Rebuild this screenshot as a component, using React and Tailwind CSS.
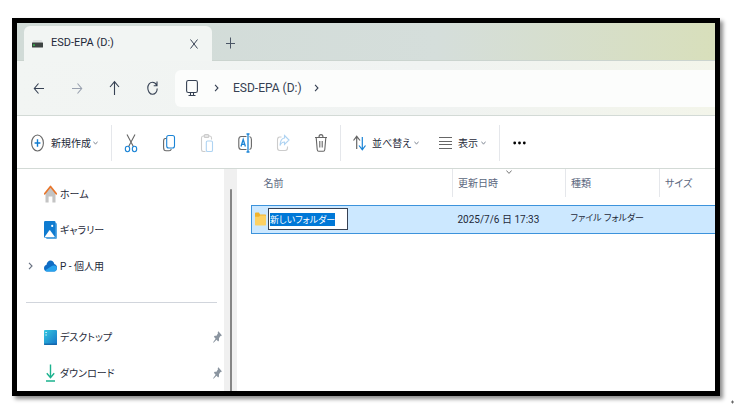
import { useEffect, useRef } from 'react';

const places = [
  { id: 'home', name: 'ホーム', icon: HomeIcon },
  { id: 'gallery', name: 'ギャラリー', icon: GalleryIcon },
  { id: 'onedrive', name: 'P - 個人用', icon: CloudIcon, expandable: true },
];

const pinned = [
  { id: 'desktop', name: 'デスクトップ', icon: DesktopIcon },
  { id: 'downloads', name: 'ダウンロード', icon: DownloadIcon },
];

function Chevron({ className = '' }) {
  return (
    <svg className={className} viewBox="0 0 6 10" fill="none" stroke="currentColor" strokeWidth="1.4">
      <path d="M1.2 1.2 4.8 5 1.2 8.8" />
    </svg>
  );
}

function ChevronDown() {
  return (
    <svg className="w-[5px] h-1 text-gray-500" viewBox="0 0 5 4" fill="none" stroke="currentColor" strokeWidth="0.8">
      <path d="M.4.6 2.5 3.2 4.6.6" />
    </svg>
  );
}

function HomeIcon() {
  return (
    <svg className="w-[13px] h-[18px]" viewBox="0 0 13 18">
      <path d="M1.5 8 6.5 2l5 6v9.400H8.400v-5.800H4.600v5.800H1.500z" fill="#c4c4c4" />
      <path d="M.7 8.800 6.500 1.400l5.800 7.400" fill="none" stroke="#e8762c" strokeWidth="1.700" strokeLinejoin="round" strokeLinecap="round" />
    </svg>
  );
}

function GalleryIcon() {
  return (
    <svg className="w-[13px] h-[18px]" viewBox="0 0 13 18">
      <rect x="2" y="2" width="11" height="16" rx="1.2" fill="#5aa9e2" />
      <rect width="11.500" height="16.800" rx="1.200" fill="#0f7bd0" />
      <path d="M.8 15.800 5.200 9.500c.3-.4.700-.4 1 0l4.600 6.300-.5.500H1.300z" fill="#fff" />
      <rect x="7.200" y="3.700" width="2" height="2.400" rx=".8" fill="#fff" />
    </svg>
  );
}

function CloudIcon() {
  return (
    <svg className="w-[13px] h-3" viewBox="0 0 13 12">
      <path d="M3 11.5C1.2 11.5 0 10 0 8.2c0-1.7 1-3 2.4-3.2C3 2.2 4.5.5 6.5.5s3.3 1.3 3.8 3.5c1.6.2 2.7 1.7 2.7 3.7 0 2.200-1.200 3.800-2.900 3.800z" fill="#0f6cc4" />
      <path d="M1 10.400 7 6.500c1-.6 2-1.200 3.300-.9 1.500.200 2.400 1 2.700 2.200-.1 2.100-1.300 3.700-2.900 3.700H3c-.8 0-1.500-.4-2-1.100z" fill="#28a3ee" />
    </svg>
  );
}

function DesktopIcon() {
  return (
    <svg className="w-[13px] h-[15px]" viewBox="0 0 13 15">
      <defs>
        <linearGradient id="desk" x1="0" y1="0" x2="1" y2="1">
          <stop offset="0" stopColor="#35c8e0" />
          <stop offset="1" stopColor="#1473c8" />
        </linearGradient>
      </defs>
      <rect width="13" height="15" rx="1" fill="url(#desk)" />
      <path d="M1.500 2.500h1.200M1.500 5h1.200" stroke="#fff" strokeWidth="1.200" />
      <path d="M0 14.200h13" stroke="#135a9c" strokeWidth="1" />
    </svg>
  );
}

function DownloadIcon() {
  return (
    <svg className="w-[13px] h-[18px]" viewBox="0 0 13 18" fill="none" stroke="#1bb28e" strokeWidth="1.400">
      <path d="M6.500.5v13M2.800 9.200l3.700 4.400 3.700-4.400M2 17h9" />
    </svg>
  );
}

function PinIcon() {
  return (
    <svg className="w-[9px] h-3" viewBox="0 0 9 12" fill="#8b95a0">
      <path d="M5.400.3 8.800 4.200 8 5.200 7.400 5 6 7.200v2.400L5.200 10.500 3.500 8.700.6 11.700.1 11.300 2.600 7.700.9 5.800l.8-1 1.800-.1L5 2.200 4.700 1.200z" />
    </svg>
  );
}

function DriveIcon() {
  return (
    <svg className="w-[11px] h-2" viewBox="0 0 11 8">
      <path d="M1.500 0h8L11 2.600H0z" fill="#dfe2e1" />
      <rect y="2.400" width="11" height="5.200" rx=".5" fill="#3e4442" />
      <rect x="1" y="4.400" width="2" height="1.500" fill="#35b44a" />
    </svg>
  );
}

function FolderIcon() {
  return (
    <svg className="w-[11px] h-3.5 shrink-0" viewBox="0 0 11 14">
      <path d="M0 1.500C0 .9.400.5.900.5h3l1.200 2h5c.5 0 .9.400.9 1V9H0z" fill="#f2b32c" />
      <path d="M0 4.800h4l1.200-1.300h5c.5 0 .8.400.8.900v8.100c0 .6-.4 1-.9 1H.9c-.5 0-.9-.4-.9-1z" fill="#fdd163" />
    </svg>
  );
}

function NavButton({ label, disabled, children }) {
  return (
    <button aria-label={label} disabled={disabled} className="w-[38px] h-9 flex items-center justify-center text-gray-700 disabled:text-gray-400">
      <svg className="w-3 h-4" viewBox="0 0 12 16" fill="none" stroke="currentColor" strokeWidth="1.100">{children}</svg>
    </button>
  );
}

function ToolButton({ label, children }) {
  return (
    <button aria-label={label} className="w-[38px] h-9 flex items-center justify-center">
      <svg className="w-3.5 h-5" viewBox="0 0 14 20" fill="none" stroke="#666" strokeWidth="1.100">{children}</svg>
    </button>
  );
}

function Divider() {
  return <div className="w-px h-9 bg-gray-200" />;
}

function TabStrip() {
  return (
    <div className="flex h-[38px] pt-[3px] pl-[7px] bg-linear-to-r from-[#d1dbd7] via-[#d5dedb] via-60% to-[#d8dfbb] border-b border-[#cbd4cf]">
      <div className="-mb-px w-[188px] flex items-center pl-2 pr-3 bg-[#f2f5f3] rounded-t-md">
        <DriveIcon />
        <span className="flex-1 ml-2 text-[11px]">ESD-EPA (D:)</span>
        <button aria-label="タブを閉じる" className="w-2.5 h-5 flex items-center text-gray-700">
          <svg className="w-2 h-2.5" viewBox="0 0 8 10" fill="none" stroke="currentColor"><path d="M.5.500l7 9M7.500.500l-7 9" /></svg>
        </button>
      </div>
      <button aria-label="新しいタブ" className="w-9 flex items-center justify-center text-gray-600">
        <svg className="w-[9px] h-3" viewBox="0 0 9 12" fill="none" stroke="currentColor"><path d="M4.500.5v11M0 6.500h9" /></svg>
      </button>
    </div>
  );
}

function AddressRow() {
  return (
    <div className="flex items-center h-[55px] pl-[3px] bg-linear-to-r from-[#f2f5f3] via-[#f0f3f2] via-60% to-[#f3f5ea] border-b border-[#d3dad6]">
      <NavButton label="戻る"><path d="M11 8.500H1.500M5.500 3.500 1.300 8.500l4.200 5" /></NavButton>
      <NavButton label="進む" disabled><path d="M1 8.500h9.500M6.500 3.500l4.200 5-4.200 5" /></NavButton>
      <NavButton label="上へ"><path d="M5.500 15V2M1 7 5.500 1.700 10 7" /></NavButton>
      <NavButton label="更新"><path d="M9.700 5.200C8.800 3.400 7.300 2.200 5.500 2.200 2.800 2.200.8 4.800.8 8S2.800 14.300 5.500 14.300 10.200 11.700 10.200 8.500M10 1.500v4.200H6.700" /></NavButton>
      <nav aria-label="アドレス" className="flex-1 flex items-center h-[37px] ml-[3px] pl-[11px] bg-[#fcfdfc] rounded-l-md text-gray-700">
        <svg className="w-3 h-[18px]" viewBox="0 0 12 18" fill="none" stroke="currentColor" strokeWidth="1.100">
          <rect x=".6" y="1.500" width="10.800" height="12" rx="1.800" />
          <path d="M4.500 13.500v2.500M7.500 13.500v2.500M2.500 16.500h7" />
        </svg>
        <Chevron className="w-[5px] h-2 ml-4" />
        <a href="#drive" className="ml-[14px] text-xs">ESD-EPA (D:)</a>
        <Chevron className="w-[5px] h-2 ml-3" />
      </nav>
    </div>
  );
}

function Toolbar() {
  return (
    <div className="flex items-center h-[53px] pt-0.5 pl-3.5 border-b border-[#d3dad6] text-[10px]">
      <button className="flex items-center w-20 h-9">
        <svg className="w-[13px] h-[18px] mr-[7px]" viewBox="0 0 13 18" fill="none" strokeWidth="1.100">
          <ellipse cx="6.500" cy="9" rx="5.900" ry="8" stroke="#666" />
          <path d="M6.500 5.200v7.600M3.600 9h5.800" stroke="#0f7bd0" strokeWidth="1.400" />
        </svg>
        <span className="w-[42px] text-left whitespace-nowrap">新規作成</span>
        <ChevronDown />
      </button>
      <Divider />
      <ToolButton label="切り取り">
        <path d="M3 1.500 9.600 14M11 1.500 4.400 14" />
        <g stroke="#1b84d6"><ellipse cx="3.500" cy="16" rx="2.200" ry="2.700" /><ellipse cx="10.500" cy="16" rx="2.200" ry="2.700" /></g>
      </ToolButton>
      <ToolButton label="コピー">
        <path d="M4.500 5.500H3.300C2.200 5.500 1.600 6.500 1.600 8v6.500c0 2 1 3.300 2.500 3.300h3c1.200 0 2-.8 2.200-2" />
        <rect x="4.700" y="2.500" width="7.800" height="12.500" rx="2" stroke="#1b84d6" />
      </ToolButton>
      <ToolButton label="貼り付け">
        <path d="M5.500 18.500H3.200C2.200 18.500 1.500 17.700 1.500 16.500V5c0-1.200.7-2 1.700-2h6.600c1 0 1.700.8 1.700 2v1.500M4.200 2.500c0-.6.400-1 1-1h2.600c.6 0 1 .4 1 1v1c0 .6-.4 1-1 1H5.200c-.6 0-1-.4-1-1z" stroke="#ccc" />
        <rect x="6.300" y="8" width="6.200" height="10.500" rx="1.300" stroke="#aed3f2" />
      </ToolButton>
      <ToolButton label="名前の変更">
        <path d="M8.500 3.500H3.300C1.800 3.500.8 4.700.8 6.500v7c0 1.800 1 3 2.500 3h5.200M11.500 3.500c1.200.3 1.900 1.400 1.900 3v7c0 1.600-.7 2.700-1.900 3" />
        <path d="M3 13.500 5.200 6.500l2.200 7M3.700 11.300h3M8.500 1h3M10 1v18M8.500 19h3" stroke="#1b84d6" strokeWidth="1.300" />
      </ToolButton>
      <ToolButton label="共有">
        <path d="M5.500 4H3.700C2.400 4 1.500 5.200 1.500 6.800v8c0 1.600.9 2.700 2.200 2.700h5.600c1.300 0 2.200-1.100 2.200-2.700v-1.300" stroke="#ccc" />
        <path d="M8.500 2.500 13 7l-4.500 4.500V9C6.500 9 5 10 4 12.500 4.200 8 5.800 5.300 8.500 5z" stroke="#aed3f2" />
      </ToolButton>
      <ToolButton label="削除">
        <path d="M1 4.500h12M5 4.300C5 2.700 5.800 1.600 7 1.600S9 2.700 9 4.300M2.200 4.700l1 11.800c.1 1 .7 1.700 1.500 1.700h4.600c.8 0 1.400-.7 1.500-1.700l1-11.800M5.800 8v6.500M8.200 8v6.500" />
      </ToolButton>
      <Divider />
      <button className="flex items-center w-[85px] h-9 pl-3">
        <svg className="w-[13px] h-4 mr-1.5" viewBox="0 0 13 16" fill="none" strokeWidth="1.200">
          <path d="M3.700 14V1.500M.5 5.500l3.200-4.200L7 5.500" stroke="#666" />
          <path d="M9.300 2v12.500M6 10.500l3.300 4.200 3.200-4.200" stroke="#1b84d6" />
        </svg>
        <span className="w-[42px] text-left whitespace-nowrap">並べ替え</span>
        <ChevronDown />
      </button>
      <button className="flex items-center w-[73px] h-9 pl-[13px]">
        <svg className="w-[13px] h-3 mr-1.5" viewBox="0 0 13 12" stroke="#666"><path d="M0 .5h13M0 4.500h13M0 7.500h13M0 11.500h13" /></svg>
        <span className="w-[23px] text-left whitespace-nowrap">表示</span>
        <ChevronDown />
      </button>
      <Divider />
      <button aria-label="その他" className="w-[38px] h-9 flex items-center justify-center">
        <svg className="w-[13px] h-1" viewBox="0 0 13 4"><circle cx="1.700" cy="2" r="1.400" /><circle cx="6.500" cy="2" r="1.400" /><circle cx="11.300" cy="2" r="1.400" /></svg>
      </button>
    </div>
  );
}

function Place({ item, pin }) {
  const Icon = item.icon;
  return (
    <li>
      <a href={`#${item.id}`} className="flex items-center h-9 pl-[11px] pr-0.5">
        <span className="w-4 text-gray-500">{item.expandable && <Chevron className="w-[5px] h-2.5" />}</span>
        <Icon />
        <span className="flex-1 ml-[3px]">{item.name}</span>
        {pin && <PinIcon />}
      </a>
    </li>
  );
}

function Sidebar() {
  return (
    <aside className="flex shrink-0 w-[220px] text-[10px]">
      <div className="flex-1 pt-[7px]">
        <ul>{places.map(p => <Place key={p.id} item={p} />)}</ul>
        <hr className="mt-[18px] mb-4 ml-[9px] mr-[7px] border-gray-300" />
        <ul>{pinned.map(p => <Place key={p.id} item={p} pin />)}</ul>
      </div>
      <div className="w-[13px] pt-5 flex justify-center bg-[#f0f0f0]">
        <div className="w-0.5 bg-[#858585] rounded-t-full" />
      </div>
    </aside>
  );
}

function FileList() {
  const nameRef = useRef(null);

  useEffect(() => {
    nameRef.current?.focus();
    nameRef.current?.select();
  }, []);

  return (
    <div className="flex-1 min-w-0 pl-3.5">
      <table className="w-full table-fixed text-left text-[10px] whitespace-nowrap">
        <thead className="text-[#5b6780]">
          <tr className="h-7">
            <th className="w-[201px] pl-3 font-normal">名前</th>
            <th className="relative w-[113px] pl-[5px] font-normal border-l border-gray-200">
              更新日時
              <svg className="absolute top-px left-1/2 -translate-x-1/2 w-1.5 h-1" viewBox="0 0 6 4" fill="none" stroke="#777"><path d="M.4.500 3 3.400 5.600.500" /></svg>
            </th>
            <th className="w-[94px] pl-[5px] font-normal border-l border-gray-200">種類</th>
            <th className="pl-[5px] font-normal border-l border-gray-200">サイズ</th>
          </tr>
        </thead>
        <tbody>
          <tr className="h-2"><td colSpan={4} /></tr>
          <tr className="h-7 bg-[#cce8ff]">
            <td className="pl-[3px] border-y border-l border-[#3c93dc]">
              <label className="flex items-center gap-0.5">
                <FolderIcon />
                <input
                  ref={nameRef}
                  aria-label="名前"
                  defaultValue="新しいフォルダー"
                  className="w-20 h-[22px] px-px text-[9px] leading-5 bg-white border border-gray-700 outline-none selection:bg-[#0078d7] selection:text-white"
                />
              </label>
            </td>
            <td className="pl-[5px] border-y border-[#3c93dc]">2025/7/6 日 17:33</td>
            <td className="pl-[5px] text-[9px] border-y border-[#3c93dc]">ファイル フォルダー</td>
            <td className="border-y border-[#3c93dc]" />
          </tr>
        </tbody>
      </table>
    </div>
  );
}

export default function App() {
  return (
    <div className="pt-[18px] pl-3 bg-white text-gray-800 font-[Roboto,'Noto_Sans_CJK_JP',sans-serif] [font-feature-settings:'palt']">
      <main className="mr-3.5 border-[5px] border-black bg-white shadow-[3px_3px_4px_rgba(0,0,0,0.45)] overflow-hidden">
        <TabStrip />
        <AddressRow />
        <Toolbar />
        <div className="flex">
          <Sidebar />
          <FileList />
        </div>
      </main>
      <svg className="w-[3px] h-1 mt-1 mb-4 ml-auto" viewBox="0 0 3 4" fill="#666">
        <path d="M0 2 2 0v1.500h1v1H2V4z" />
      </svg>
    </div>
  );
}
